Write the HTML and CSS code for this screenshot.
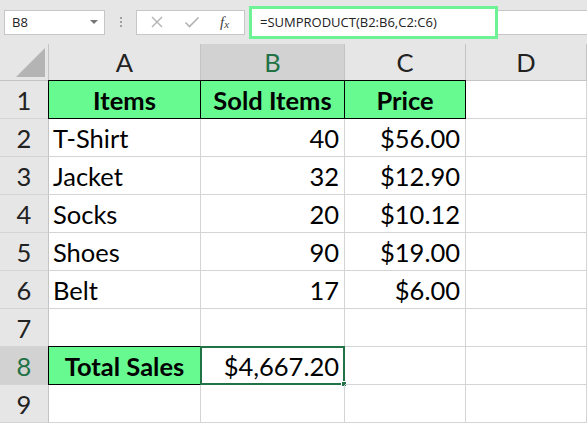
FILE: index.html
```html
<!DOCTYPE html>
<html>
<head>
<meta charset="utf-8">
<link rel="stylesheet" href="styles.css">
</head>
<body>
<div class="toolbar">
  <div class="namebox"><span>B8</span><span class="caret"></span></div>
  <div class="dots"><i></i><i></i><i></i></div>
  <div class="fbuttons">
    <svg class="ic" width="14" height="14" viewBox="0 0 14 14"><path d="M2 2 L12 12 M12 2 L2 12" stroke="#b3b3b3" stroke-width="1.4" fill="none"/></svg>
    <svg class="ic" width="16" height="14" viewBox="0 0 16 14"><path d="M1.5 7.5 L5.5 11.5 L14.5 2.5" stroke="#b3b3b3" stroke-width="1.6" fill="none"/></svg>
    <span class="fx">f<sub>x</sub></span>
  </div>
  <div class="formulabar">
    <div class="formula">=SUMPRODUCT(B2:B6,C2:C6)</div>
    <div class="rest"></div>
  </div>
</div>
<div class="sheet">
  <div class="corner"><span class="tri"></span></div>
  <div class="ch">A</div>
  <div class="ch sel">B</div>
  <div class="ch">C</div>
  <div class="ch">D</div>

  <div class="rh">1</div>
  <div class="c hd">Items</div>
  <div class="c hd">Sold Items</div>
  <div class="c hd">Price</div>
  <div class="c"></div>

  <div class="rh">2</div>
  <div class="c l">T-Shirt</div>
  <div class="c r">40</div>
  <div class="c r">$56.00</div>
  <div class="c"></div>

  <div class="rh">3</div>
  <div class="c l">Jacket</div>
  <div class="c r">32</div>
  <div class="c r">$12.90</div>
  <div class="c"></div>

  <div class="rh">4</div>
  <div class="c l">Socks</div>
  <div class="c r">20</div>
  <div class="c r">$10.12</div>
  <div class="c"></div>

  <div class="rh">5</div>
  <div class="c l">Shoes</div>
  <div class="c r">90</div>
  <div class="c r">$19.00</div>
  <div class="c"></div>

  <div class="rh">6</div>
  <div class="c l">Belt</div>
  <div class="c r">17</div>
  <div class="c r">$6.00</div>
  <div class="c"></div>

  <div class="rh">7</div>
  <div class="c"></div>
  <div class="c"></div>
  <div class="c"></div>
  <div class="c"></div>

  <div class="rh sel">8</div>
  <div class="c total">Total Sales</div>
  <div class="c r active">$4,667.20<span class="handle"></span></div>
  <div class="c"></div>
  <div class="c"></div>

  <div class="rh">9</div>
  <div class="c"></div>
  <div class="c"></div>
  <div class="c"></div>
  <div class="c"></div>
</div>
</body>
</html>
```
FILE: styles.css
```css
* { box-sizing: border-box; }
html, body { margin: 0; padding: 0; }
body {
  width: 587px;
  height: 423px;
  overflow: hidden;
  background: #e6e6e6;
  font-family: "Open Sans", "Noto Sans", sans-serif;
}
.toolbar {
  height: 44px;
  display: flex;
  align-items: center;
  padding-left: 4px;
}
.namebox {
  width: 101px;
  height: 25px;
  background: #fff;
  border: 1px solid #c6c6c6;
  display: flex;
  align-items: center;
  justify-content: space-between;
  padding: 0 6px 0 7px;
  font-size: 13px;
  color: #222;
}
.caret {
  width: 0; height: 0;
  border-left: 4px solid transparent;
  border-right: 4px solid transparent;
  border-top: 4px solid #777;
}
.dots {
  width: 31px;
  display: flex;
  flex-direction: column;
  align-items: center;
  gap: 2px;
}
.dots i {
  display: block;
  width: 2px; height: 2px;
  background: #a0a0a0;
}
.fbuttons {
  width: 109px;
  height: 25px;
  background: #fff;
  border: 1px solid #c6c6c6;
  display: flex;
  align-items: center;
  padding-left: 13px;
  gap: 20px;
}
.fx {
  font-family: "Liberation Serif", serif;
  font-style: italic;
  font-size: 15px;
  color: #444;
  line-height: 1;
}
.fx sub { font-size: 11px; vertical-align: -1px; }
.formulabar {
  flex: 1;
  display: flex;
  align-items: center;
  margin-left: 4px;
}
.formula {
  width: 249px;
  height: 33px;
  background: #fff;
  border: 3px solid #6ef296;
  display: flex;
  align-items: center;
  padding-left: 8px;
  font-size: 13px;
  color: #222;
  white-space: nowrap;
}
.rest {
  flex: 1;
  height: 25px;
  background: #fff;
  border-top: 1px solid #c6c6c6;
  border-bottom: 1px solid #c6c6c6;
}
.sheet {
  display: grid;
  grid-template-columns: 49px 152px 144px 121px 1fr;
  grid-template-rows: 37px repeat(9, 38px);
  background: #fff;
  font-family: "Lato", "Open Sans", sans-serif;
  font-size: 25.5px;
  color: #000;
}
.corner {
  background: #e6e6e6;
  border-right: 1px solid #c4c4c4;
  border-bottom: 1px solid #c4c4c4;
  position: relative;
}
.tri {
  position: absolute;
  right: 3px;
  bottom: 3px;
  width: 0; height: 0;
  border-left: 29px solid transparent;
  border-bottom: 29px solid #b4b4b4;
}
.ch {
  background: #e6e6e6;
  border-right: 1px solid #c4c4c4;
  border-bottom: 1px solid #c4c4c4;
  display: flex;
  align-items: center;
  justify-content: center;
  color: #222;
}
.ch.sel { background: #d2d2d2; color: #217346; }
.rh {
  background: #e6e6e6;
  border-right: 1px solid #c4c4c4;
  border-bottom: 1px solid #d4d4d4;
  display: flex;
  align-items: center;
  justify-content: center;
  color: #222;
}
.rh.sel { background: #d2d2d2; color: #217346; }
.c {
  border-right: 1px solid #d4d4d4;
  border-bottom: 1px solid #d4d4d4;
  display: flex;
  align-items: center;
  white-space: nowrap;
  position: relative;
}
.c.l { padding-left: 4px; }
.c.r { justify-content: flex-end; padding-right: 5px; }
.c.hd, .c.total {
  background: #66fa90;
  border: 1px solid #000;
  margin: -1px 0 0 -1px;
  font-weight: 700;
  justify-content: center;
}
.c.active {
  border: 2px solid #217346;
  margin: -1px 0 0 -1px;
  padding-right: 4px;
}
.handle {
  position: absolute;
  right: -4px;
  bottom: -4px;
  width: 6px;
  height: 6px;
  background: #217346;
  border: 1px solid #fff;
}
```
